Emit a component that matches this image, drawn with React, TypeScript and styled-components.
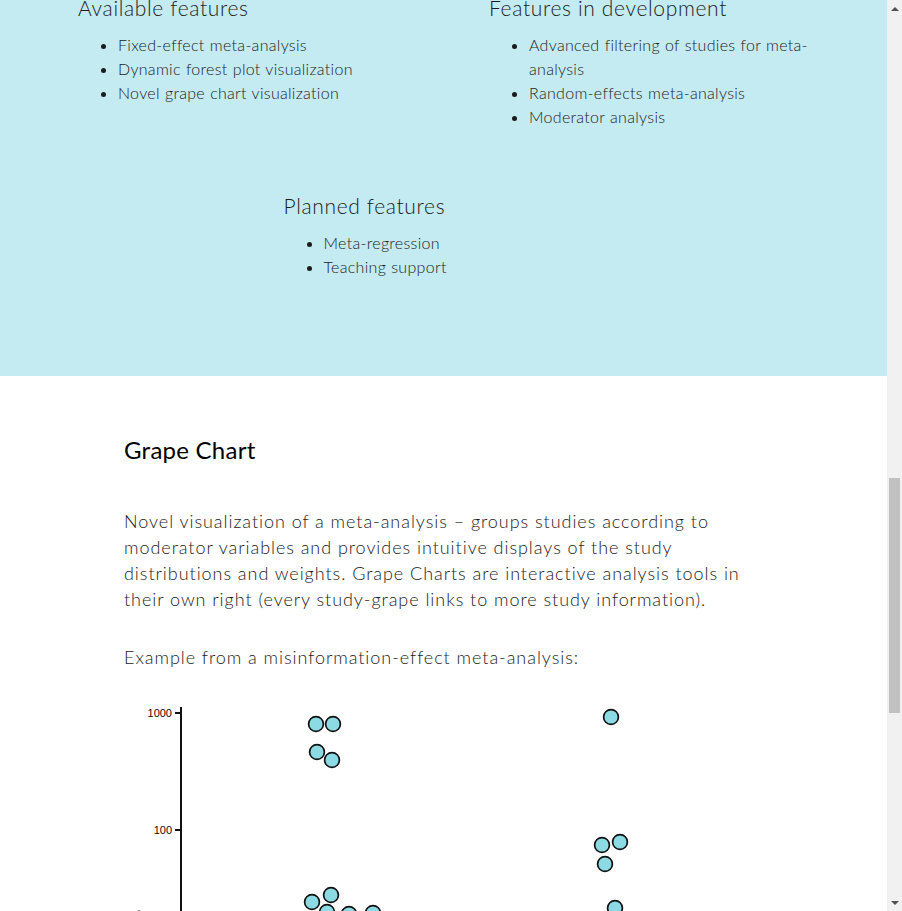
import { useLayoutEffect, useRef } from 'react';
import styled, { createGlobalStyle } from 'styled-components';

const GlobalStyle = createGlobalStyle`
    html, body {
        margin: 0;
        padding: 0;
        height: 100%;
        overflow: hidden;
        background: #ffffff;
    }

    body {
        font-family: 'Lato', 'Liberation Sans', sans-serif;
        color: #1c1c1c;
    }
`;

const Frame = styled.div`
    display: flex;
    width: 100vw;
    height: 100vh;
`;

const Page = styled.div`
    flex: 1;
    height: 100%;
    overflow: hidden;
`;

const FeatureSection = styled.section`
    background: #c4eaf2;
    padding: 64px 0 97px;
    display: flex;
    flex-direction: column;
    align-items: center;
    gap: 64px;
`;

const FeatureRow = styled.div`
    display: flex;
    justify-content: center;
    gap: 91px;
`;

const FeatureColumn = styled.div`
    width: 320px;
`;

const FeatureTitle = styled.h3`
    margin: 0;
    font-size: 21px;
    line-height: 25px;
    font-weight: 300;
    color: #1c1c1c;
    letter-spacing: 0.65px;
`;

const FeatureList = styled.ul`
    margin: 13px 0 0;
    padding-left: 40px;
`;

const FeatureItem = styled.li`
    font-size: 16px;
    line-height: 24px;
    font-weight: 300;
    color: #1c1c1c;
    letter-spacing: 0.3px;
    word-spacing: 0.5px;
`;

const ChartSection = styled.section`
    padding: 59px 124px 60px;
`;

const SectionTitle = styled.h2`
    margin: 0;
    font-size: 24px;
    line-height: 29px;
    font-weight: 400;
    color: #000000;
    letter-spacing: 0.25px;
`;

const Paragraph = styled.p<{ $gap: number }>`
    margin: ${(p) => p.$gap}px 0 0;
    max-width: 639px;
    font-size: 18px;
    line-height: 26px;
    font-weight: 300;
    color: #1c1c1c;
    letter-spacing: 0.95px;
`;

const ChartWrap = styled.div`
    margin-top: 30px;
`;

const Scrollbar = styled.div`
    width: 15px;
    height: 100%;
    background: #f1f1f1;
    display: flex;
    flex-direction: column;
`;

const ArrowButton = styled.div<{ $down?: boolean }>`
    height: 17px;
    display: flex;
    align-items: center;
    justify-content: center;

    &::before {
        content: '';
        width: 0;
        height: 0;
        border-left: 4px solid transparent;
        border-right: 4px solid transparent;
        ${(p) =>
            p.$down
                ? 'border-top: 4px solid #505050;'
                : 'border-bottom: 4px solid #505050;'}
    }
`;

const Track = styled.div`
    flex: 1;
    display: flex;
    flex-direction: column;
    align-items: center;
`;

const Thumb = styled.div<{ $offset: number; $size: number }>`
    margin-top: ${(p) => p.$offset}px;
    width: 11px;
    height: ${(p) => p.$size}px;
    background: #c1c1c1;
`;

const available = [
    'Fixed-effect meta-analysis',
    'Dynamic forest plot visualization',
    'Novel grape chart visualization',
];

const inDevelopment = [
    'Advanced filtering of studies for meta-analysis',
    'Random-effects meta-analysis',
    'Moderator analysis',
];

const planned = ['Meta-regression', 'Teaching support'];

const grapes: [number, number][] = [
    [192, 24],
    [209, 24],
    [193, 52],
    [208, 60],
    [188, 202],
    [207, 195],
    [203, 212],
    [225, 214],
    [249, 213],
    [245, 236],
    [270, 240],
    [487, 17],
    [478, 145],
    [496, 142],
    [481, 164],
    [491, 208],
    [470, 232],
];

const Feature = ({ title, items }: { title: string; items: string[] }) => (
    <FeatureColumn>
        <FeatureTitle>{title}</FeatureTitle>
        <FeatureList>
            {items.map((item) => (
                <FeatureItem key={item}>{item}</FeatureItem>
            ))}
        </FeatureList>
    </FeatureColumn>
);

const GrapeChart = () => (
    <svg width="640" height="320" viewBox="0 0 640 320">
        <line x1="57" y1="7" x2="57" y2="320" stroke="#111" strokeWidth="2" />
        {[
            { y: 13, label: '1000' },
            { y: 130, label: '100' },
        ].map((t) => (
            <g key={t.label}>
                <line x1="51" y1={t.y} x2="57" y2={t.y} stroke="#111" strokeWidth="2" />
                <text
                    x="48"
                    y={t.y + 4}
                    textAnchor="end"
                    fontSize="11"
                    fontFamily="'Liberation Sans', Arial, sans-serif"
                    fill="#1e0606"
                >
                    {t.label}
                </text>
            </g>
        ))}
        <text
            x="18"
            y="210"
            fontSize="11"
            fontFamily="'Liberation Sans', Arial, sans-serif"
            fill="#111"
            transform="rotate(-90 18 210)"
            textAnchor="end"
        >
            Ratio
        </text>
        {grapes.map(([cx, cy], i) => (
            <circle
                key={i}
                cx={cx}
                cy={cy}
                r="7.4"
                fill="#8cdbe4"
                stroke="#111"
                strokeWidth="1.7"
            />
        ))}
    </svg>
);

export default function App() {
    const pageRef = useRef<HTMLDivElement>(null);

    useLayoutEffect(() => {
        if (pageRef.current) pageRef.current.scrollTop = 69;
    }, []);

    return (
        <>
            <GlobalStyle />
            <Frame>
                <Page ref={pageRef}>
                    <FeatureSection>
                        <FeatureRow>
                            <Feature title="Available features" items={available} />
                            <Feature title="Features in development" items={inDevelopment} />
                        </FeatureRow>
                        <FeatureRow>
                            <Feature title="Planned features" items={planned} />
                        </FeatureRow>
                    </FeatureSection>
                    <ChartSection>
                        <SectionTitle>Grape Chart</SectionTitle>
                        <Paragraph $gap={44}>
                            Novel visualization of a meta-analysis – groups studies according to
                            moderator variables and provides intuitive displays of the study
                            distributions and weights. Grape Charts are interactive analysis tools in
                            their own right (every study-grape links to more study information).
                        </Paragraph>
                        <Paragraph $gap={32}>
                            Example from a misinformation-effect meta-analysis:
                        </Paragraph>
                        <ChartWrap>
                            <GrapeChart />
                        </ChartWrap>
                    </ChartSection>
                </Page>
                <Scrollbar>
                    <ArrowButton />
                    <Track>
                        <Thumb $offset={461} $size={235} />
                    </Track>
                    <ArrowButton $down />
                </Scrollbar>
            </Frame>
        </>
    );
}
